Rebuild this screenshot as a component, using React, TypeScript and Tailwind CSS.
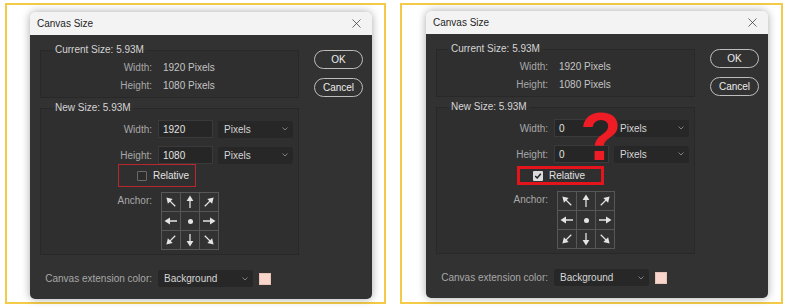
import React from 'react';
import { X } from 'lucide-react';

type Variant = 'before' | 'after';

const font = { fontFamily: '"Liberation Sans", Arial, sans-serif' };

// arrow pointing up in a 14x14 box, rotated per anchor cell
const Arrow = ({ angle }: { angle: number }) => (
  <svg width="14" height="14" viewBox="0 0 14 14">
    <g transform={`rotate(${angle} 7 7)`} fill="#e4e4e4" stroke="#e4e4e4">
      <line x1="7" y1="13" x2="7" y2="5" strokeWidth="1.3" />
      <polygon points="7,0.5 3.6,6 10.4,6" stroke="none" />
    </g>
  </svg>
);

const anchorCells = [-45, 0, 45, -90, null, 90, -135, 180, 135];

const AnchorGrid = () => (
  <div className="grid w-[58px] grid-cols-3 gap-px border border-[#575757] bg-[#575757]">
    {anchorCells.map((a, i) => (
      <div key={i} className="flex h-[18px] w-[18px] items-center justify-center bg-[#323232]">
        {a === null ? <div className="h-[5px] w-[5px] rounded-full bg-[#e4e4e4]" /> : <Arrow angle={a} />}
      </div>
    ))}
  </div>
);

const Chevron = () => (
  <svg width="6" height="4" viewBox="0 0 6 4" className="mr-[5px]">
    <polyline points="0.5,0.5 3,3 5.5,0.5" fill="none" stroke="#8a8a8a" strokeWidth="0.9" />
  </svg>
);

const Select = ({ value, width }: { value: string; width: string }) => (
  <div className={`flex h-[17px] items-center justify-between rounded-[2px] bg-[#272727] pl-[6px] text-[#d6d6d6] ${width}`}>
    <span>{value}</span>
    <Chevron />
  </div>
);

const Checkbox = ({ checked }: { checked: boolean }) =>
  checked ? (
    <div className="flex h-[10px] w-[10px] items-center justify-center rounded-[1px] bg-[#dcdcdc]">
      <svg width="8" height="8" viewBox="0 0 8 8">
        <polyline points="1.2,4 3.2,6 6.8,1.8" fill="none" stroke="#222" strokeWidth="1.5" />
      </svg>
    </div>
  ) : (
    <div className="h-[10px] w-[10px] rounded-[1px] border border-[#6a6a6a] bg-[#2c2c2c]" />
  );

const Dialog = ({ variant }: { variant: Variant }) => {
  const after = variant === 'after';
  return (
    <div className="w-[342px] overflow-hidden rounded-t-[6px] rounded-b-[5px] text-[10px] shadow-[0_0_9px_rgba(0,0,0,0.35)]" style={font}>
      {/* title bar */}
      <div className="flex h-[23px] items-center justify-between bg-[#f3f3f3] pl-[7px] pr-[8px] text-[#1e1e1e]">
        <span>Canvas Size</span>
        <X size={15} strokeWidth={1.1} color="#2a2a2a" />
      </div>

      <div className="flex h-[264px] flex-col bg-[#323232]">
        <div className="flex">
          <div className="ml-[10px] w-[259px]">
            {/* current size */}
            <fieldset className="mt-[9px] border border-[#282828] bg-[#2f2f2f] pb-[3px] pt-[2px]">
              <legend className="ml-[11px] px-[3px] leading-[12px] text-[#d4d4d4]">Current Size: 5.93M</legend>
              <div className="flex h-[18px] items-center">
                <span className="w-[111px] text-right text-[#a8a8a8]">Width:</span>
                <span className="ml-[11px] text-[#c4c4c4]">1920 Pixels</span>
              </div>
              <div className="flex h-[18px] items-center">
                <span className="w-[111px] text-right text-[#a8a8a8]">Height:</span>
                <span className="ml-[11px] text-[#c4c4c4]">1080 Pixels</span>
              </div>
            </fieldset>

            {/* new size */}
            <fieldset className="mt-[4px] border border-[#282828] bg-[#2f2f2f] pb-[4px]">
              <legend className="ml-[11px] px-[3px] leading-[12px] text-[#d4d4d4]">New Size: 5.93M</legend>
              <div className="mt-[6px] flex h-[18px] items-center">
                <span className="w-[111px] text-right text-[#a8a8a8]">Width:</span>
                <div className="ml-[6px] flex h-[18px] w-[55px] items-center border border-[#3a3a3a] bg-[#262626] pl-[4px] text-[#e2e2e2]">
                  {after ? '0' : '1920'}
                </div>
                <div className="ml-[5px]">
                  <Select value="Pixels" width="w-[75px]" />
                </div>
              </div>
              <div className="mt-[8px] flex h-[18px] items-center">
                <span className="w-[111px] text-right text-[#a8a8a8]">Height:</span>
                <div className="ml-[6px] flex h-[18px] w-[55px] items-center border border-[#3a3a3a] bg-[#262626] pl-[4px] text-[#e2e2e2]">
                  {after ? '0' : '1080'}
                </div>
                <div className="ml-[5px]">
                  <Select value="Pixels" width="w-[75px]" />
                </div>
              </div>
              <div className="flex h-[23px]">
                {after ? (
                  <div className="ml-[80px] mt-[3px] flex h-[19px] w-[87px] items-center border-[3px] border-[#e3141b] pl-[13px]">
                    <Checkbox checked />
                    <span className="ml-[6px] text-[#e2e2e2]">Relative</span>
                  </div>
                ) : (
                  <div className="ml-[77px] flex h-[23px] w-[78px] items-center border-[1.5px] border-[#b9262b] pl-[18px]">
                    <Checkbox checked={false} />
                    <span className="ml-[6px] text-[#e2e2e2]">Relative</span>
                  </div>
                )}
              </div>
              <div className="mt-[5px] flex">
                <span className="w-[111px] pt-[1px] text-right text-[#a8a8a8]">Anchor:</span>
                <div className="ml-[9px]">
                  <AnchorGrid />
                </div>
              </div>
            </fieldset>
          </div>

          {/* buttons */}
          <div className="ml-[15px] flex w-[49px] flex-col pt-[15px]">
            <button className="h-[19px] rounded-full border border-[#bdbdbd] text-[#ececec]">OK</button>
            <button className="mt-[9px] h-[19px] rounded-full border border-[#bdbdbd] text-[#ececec]">Cancel</button>
          </div>
        </div>

        {/* extension colour */}
        <div className="ml-[11px] mt-[15px] flex items-center">
          <span className="w-[111px] text-right text-[#a8a8a8]">Canvas extension color:</span>
          <div className="ml-[6px]">
            <Select value="Background" width="w-[95px]" />
          </div>
          <div className="ml-[6px] h-[12px] w-[12px] border border-[#e8c2b6] bg-[#f8d6cb]" />
        </div>
      </div>
    </div>
  );
}

export default function App() {
  return (
    <div className="flex h-[308px] w-[787px] gap-[14px] bg-white pl-[5px] pt-[3px]">
      <div className="h-[301px] w-[381px] border-2 border-[#f3cb48] bg-white pl-[23px] pt-[7px]">
        <Dialog variant="before" />
      </div>
      <div className="relative h-[301px] w-[383px] border-2 border-[#f3cb48] bg-white pl-[24px] pt-[6px]">
        <Dialog variant="after" />
        <span
          className="absolute left-[178px] top-[97px] text-[68px] font-bold leading-none text-[#ee1c24]"
          style={font}
        >
          ?
        </span>
      </div>
    </div>
  );
}
